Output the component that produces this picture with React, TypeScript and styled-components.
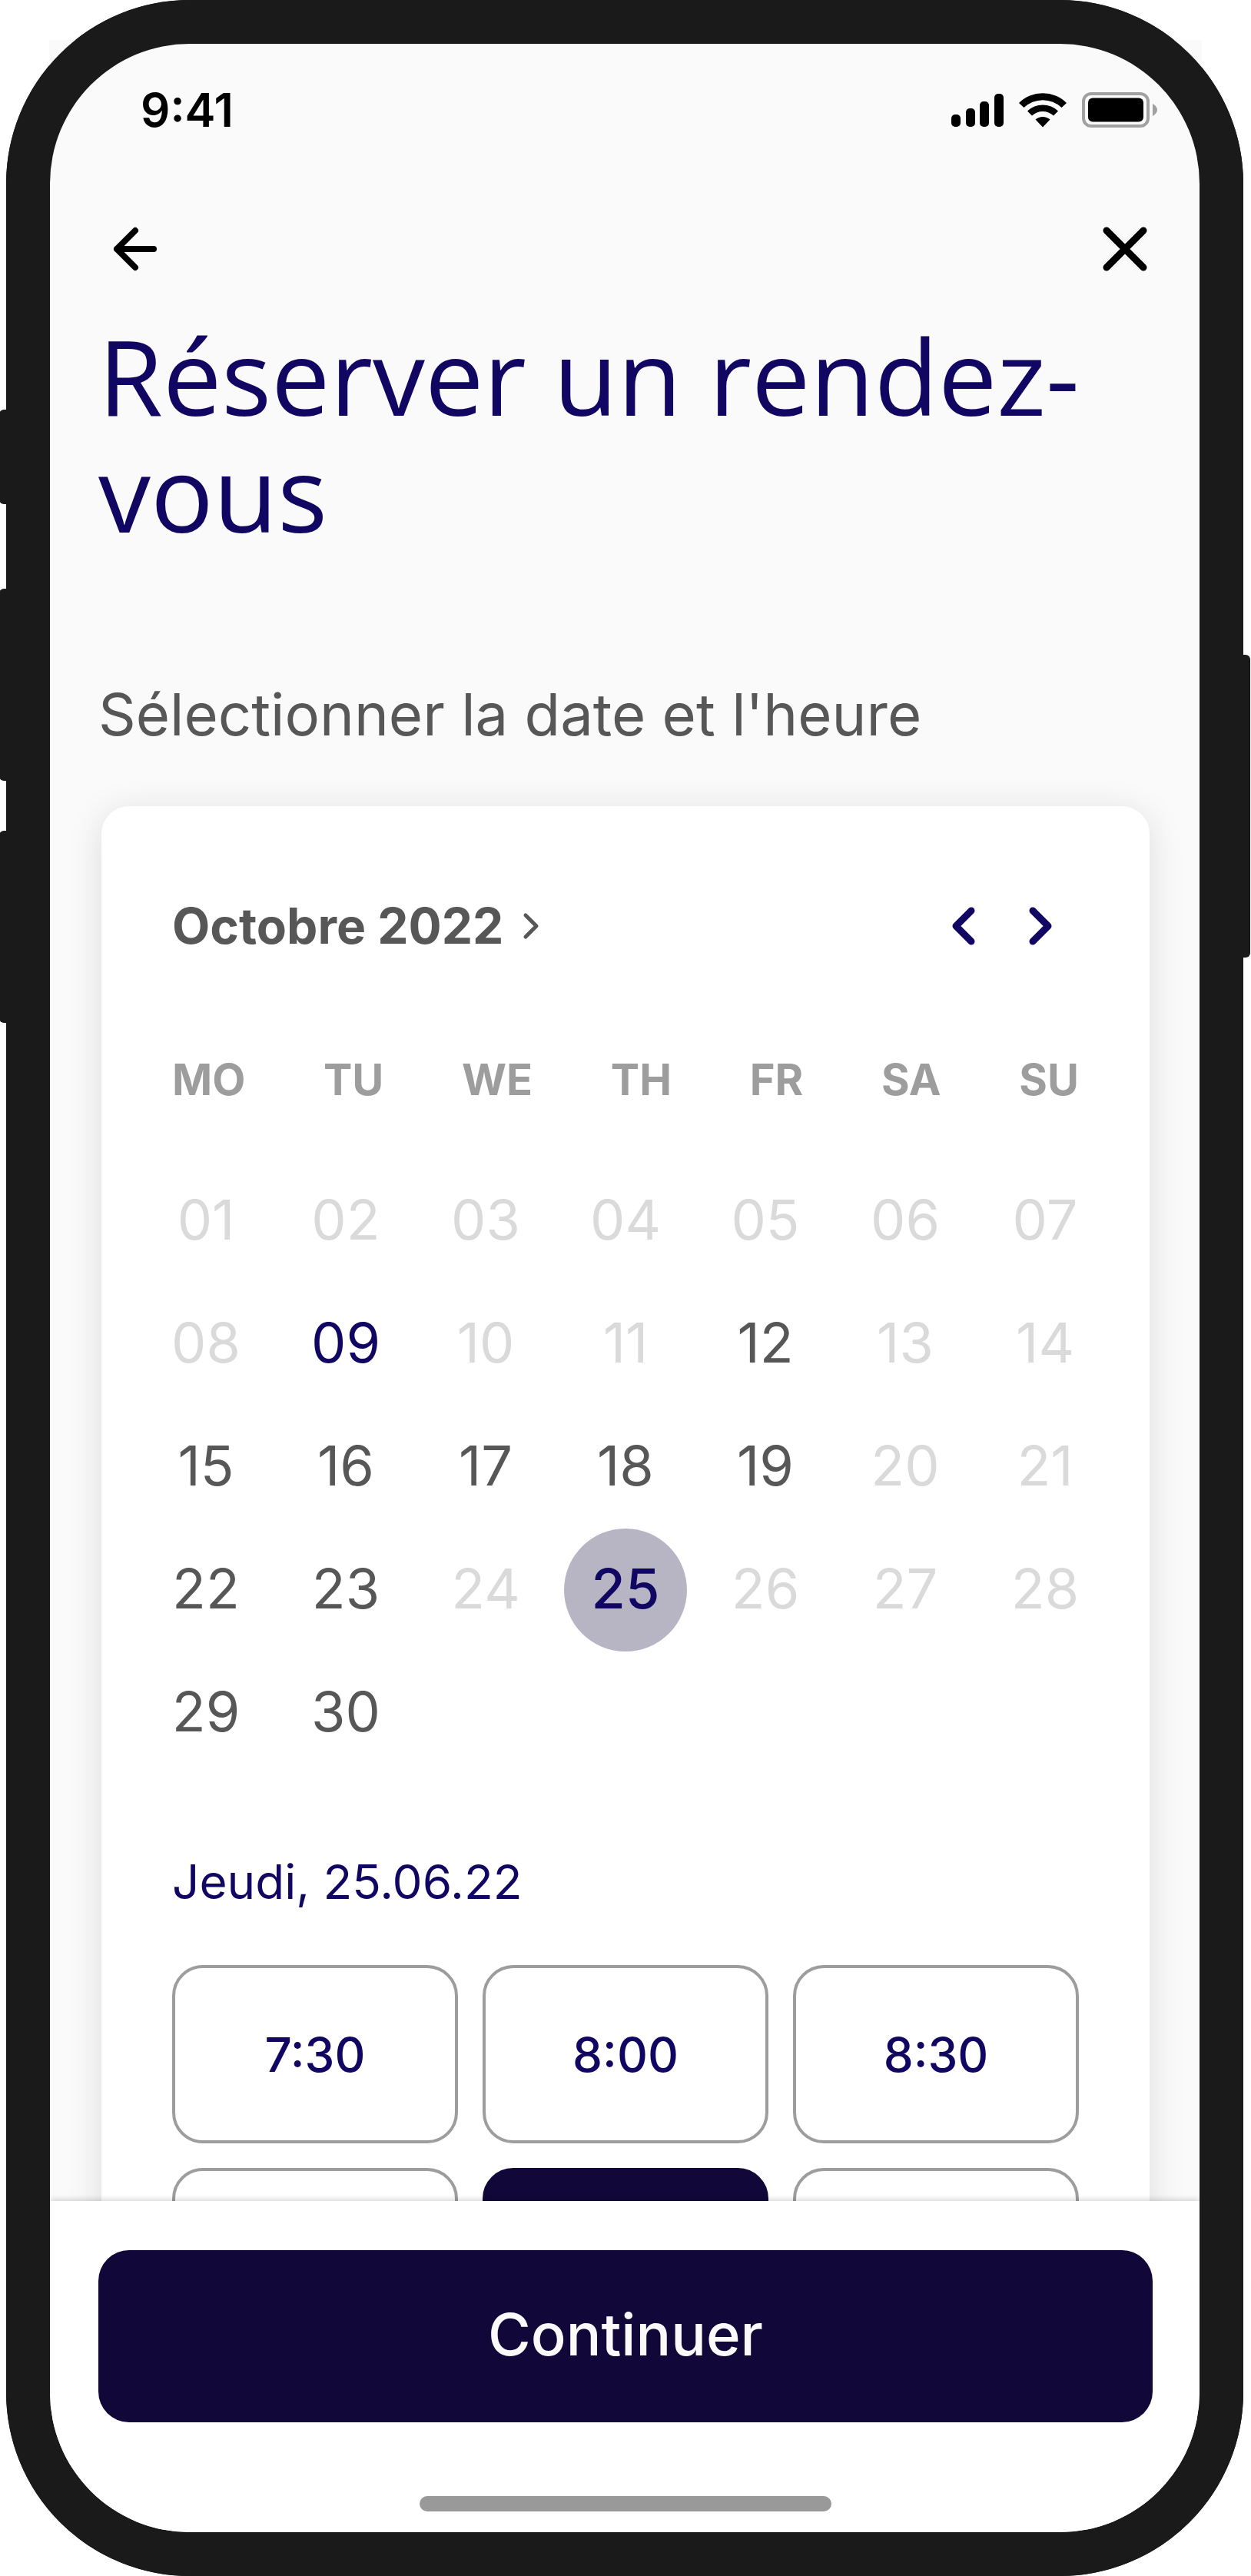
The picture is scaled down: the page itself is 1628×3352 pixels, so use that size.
import React, { useState } from "react";
import styled, { createGlobalStyle } from "styled-components";

const color = {
  bezel: "#1a1a1a",
  surface: "#fafafa",
  white: "#ffffff",
  ink: "#110763",
  navy: "#110839",
  text: "#575757",
  muted: "#9d9d9d",
  faint: "#dadada",
  selected: "#b7b5c4",
};

const GlobalStyle = createGlobalStyle`
  *, *::before, *::after { box-sizing: border-box; }
  body { margin: 0; background: ${color.white}; }
  button { font: inherit; color: inherit; border: 0; padding: 0; background: none; cursor: pointer; }
  h1, h2, p { margin: 0; font-weight: 400; }
`;

const Stage = styled.div`
  height: 100vh;
  padding: 0 10px 0 8px;
  font-family: Inter, "Liberation Sans", sans-serif;
`;

const Device = styled.div`
  position: relative;
  isolation: isolate;
  height: 100%;
  border: 57px solid ${color.bezel};
  border-radius: 239px;
  background: ${color.bezel};

  &::before {
    content: "";
    position: absolute;
    z-index: -1;
    inset: -5px -3px auto -1px;
    height: 120px;
    background: ${color.surface};
  }
`;

const Corners = styled.div`
  position: absolute;
  z-index: -1;
  inset: -57px;
  border-radius: 239px;
  background: ${color.bezel};
`;

const SideKey = styled.span<{ $side: "left" | "right"; $top: number; $height: number }>`
  position: absolute;
  z-index: -1;
  ${(p) => p.$side}: -66px;
  top: ${(p) => p.$top}px;
  width: 24px;
  height: ${(p) => p.$height}px;
  border-radius: 6px;
  background: ${color.bezel};
`;

const Screen = styled.main`
  display: flex;
  flex-direction: column;
  height: 100%;
  overflow: hidden;
  border-radius: 182px;
  background: ${color.surface};
`;

const StatusBar = styled.div`
  flex: none;
  display: flex;
  align-items: center;
  justify-content: space-between;
  height: 172px;
  padding: 0 55px 0 118px;
  color: #000;
`;

const Clock = styled.time`
  font-size: 60px;
  line-height: 72px;
  font-weight: 600;
`;

const StatusIcons = styled.svg`
  width: 268px;
  height: 48px;
`;

const Content = styled.div`
  flex: 1;
  min-height: 0;
  overflow: hidden;
  padding: 0 61px 0 63px;
`;

const Nav = styled.nav`
  display: flex;
  align-items: center;
  justify-content: space-between;
  padding: 48px 0 40px;
`;

const IconButton = styled.button<{ $width: number; $height: number }>`
  display: flex;
  width: ${(p) => p.$width}px;
  height: ${(p) => p.$height}px;

  svg {
    width: 100%;
    height: 100%;
    fill: none;
    stroke: currentColor;
    stroke-linecap: round;
    stroke-linejoin: round;
  }
`;

const Title = styled.h1`
  font-family: "Open Sans", "Noto Sans", sans-serif;
  font-size: 136px;
  line-height: 152px;
  color: ${color.ink};
`;

const Subtitle = styled.p`
  margin: 160px 0 68px;
  font-size: 76px;
  line-height: 104px;
  color: ${color.text};
`;

const Card = styled.section`
  margin: 0 4px;
  padding: 108px 92px;
  border-radius: 36px;
  background: ${color.white};
  box-shadow: 0 8px 48px rgba(0, 0, 0, 0.12);
`;

const CardHeader = styled.div`
  display: flex;
  align-items: center;
  justify-content: space-between;
`;

const MonthButton = styled.button`
  display: flex;
  align-items: center;
  gap: 20px;
  height: 96px;
  font-size: 64px;
  line-height: 96px;
  font-weight: 700;
  color: ${color.text};

  svg {
    width: 32px;
    height: 48px;
    fill: none;
    stroke: currentColor;
    stroke-linecap: round;
    stroke-linejoin: round;
  }
`;

const Arrows = styled.div`
  display: flex;
  gap: 4px;
  color: ${color.ink};
`;

const Weekdays = styled.div`
  display: flex;
  justify-content: space-between;
  margin: 112px 0 64px;
  font-size: 56px;
  line-height: 80px;
  font-weight: 700;
  color: ${color.muted};
`;

const Days = styled.div`
  display: grid;
  grid-template-columns: repeat(7, 1fr);
  justify-items: center;
  margin: 0 -47px;
`;

type DayKind = "off" | "free" | "today" | "selected";

const dayColor: Record<DayKind, string> = {
  off: color.faint,
  free: color.text,
  today: color.ink,
  selected: color.ink,
};

const Day = styled.button<{ $kind: DayKind }>`
  width: 160px;
  height: 160px;
  padding-bottom: 6px;
  border-radius: 50%;
  font-size: 72px;
  font-weight: ${(p) => (p.$kind === "selected" ? 500 : 400)};
  color: ${(p) => dayColor[p.$kind]};
  background: ${(p) => (p.$kind === "selected" ? color.selected : "transparent")};
`;

const DateLabel = styled.h2`
  margin: 92px 0 60px;
  font-size: 62px;
  line-height: 96px;
  color: ${color.ink};
`;

const Slots = styled.div`
  display: grid;
  grid-template-columns: repeat(3, 1fr);
  gap: 32px;
`;

const Slot = styled.button<{ $active?: boolean }>`
  height: 232px;
  border: 4px solid ${(p) => (p.$active ? color.navy : color.muted)};
  border-radius: 40px;
  background: ${(p) => (p.$active ? color.navy : color.white)};
  font-size: 62px;
  font-weight: 500;
  color: ${(p) => (p.$active ? color.surface : color.ink)};
`;

const Footer = styled.footer`
  position: relative;
  flex: none;
  display: flex;
  flex-direction: column;
  align-items: center;
  gap: 96px;
  padding: 64px 61px 27px 63px;
  background: ${color.white};
  box-shadow: 0 -1px 8px rgba(0, 0, 0, 0.2);
`;

const Continue = styled.button`
  width: 100%;
  height: 224px;
  padding-bottom: 6px;
  border-radius: 40px;
  background: ${color.navy};
  font-size: 76px;
  font-weight: 500;
  color: ${color.surface};
`;

const HomeIndicator = styled.div`
  width: 536px;
  height: 20px;
  border-radius: 10px;
  background: #999;
`;

const weekdays = ["MO", "TU", "WE", "TH", "FR", "SA", "SU"];
const openDays = [12, 15, 16, 17, 18, 19, 22, 23, 29, 30];
const slots = ["7:30", "8:00", "8:30"];
const laterSlots = ["9:00", "9:30", "10:00"];

export default function App() {
  const [selected, setSelected] = useState(25);

  const kindOf = (day: number): DayKind => {
    if (day === selected) return "selected";
    if (day === 9) return "today";
    return openDays.includes(day) ? "free" : "off";
  };

  return (
    <Stage>
      <GlobalStyle />
      <Device>
        <Corners />
        <SideKey $side="left" $top={476} $height={123} />
        <SideKey $side="left" $top={709} $height={250} />
        <SideKey $side="left" $top={1024} $height={250} />
        <SideKey $side="right" $top={795} $height={394} />
        <Screen>
          <StatusBar>
            <Clock>9:41</Clock>
            <StatusIcons viewBox="0 0 268 48" aria-hidden="true">
              <rect x="0" y="30" width="12" height="16" rx="5" />
              <rect x="19" y="22" width="12" height="24" rx="5" />
              <rect x="37" y="13" width="12" height="33" rx="5" />
              <rect x="56" y="3" width="12" height="43" rx="5" />
              <path d="M88 15 A44 44 0 0 1 150 15 L143.500 21 A35.500 35.500 0 0 0 94.500 21 Z" />
              <path d="M99 25.500 A29 29 0 0 1 139 25.500 L133 31.500 A20.500 20.500 0 0 0 105 31.500 Z" />
              <path d="M109.500 36.500 A14.500 14.500 0 0 1 128.500 36.500 L119 46.500 Z" />
              <rect x="172" y="3" width="84" height="42" rx="10" fill="none" stroke="#a1a1a1" strokeWidth="4" />
              <rect x="178" y="8.500" width="72" height="31" rx="6" />
              <path d="M262 16 Q268 19.500 268 24 Q268 28.500 262 32 Z" fill="#a1a1a1" />
            </StatusIcons>
          </StatusBar>
          <Content>
            <Nav>
              <IconButton $width={96} $height={96} aria-label="Retour">
                <svg viewBox="0 0 96 96" strokeWidth="8">
                  <path d="M72 47H24M48 23L24 47L48 71" />
                </svg>
              </IconButton>
              <IconButton $width={72} $height={96} aria-label="Fermer">
                <svg viewBox="0 0 72 96" strokeWidth="9">
                  <path d="M12 23L60 71M60 23L12 71" />
                </svg>
              </IconButton>
            </Nav>
            <Title>Réserver un rendez-vous</Title>
            <Subtitle>Sélectionner la date et l'heure</Subtitle>
            <Card>
              <CardHeader>
                <MonthButton>
                  Octobre 2022
                  <svg viewBox="0 0 32 48" strokeWidth="5" aria-hidden="true">
                    <path d="M9 10L23 24L9 38" />
                  </svg>
                </MonthButton>
                <Arrows>
                  <IconButton $width={96} $height={96} aria-label="Mois précédent">
                    <svg viewBox="0 0 96 96" strokeWidth="9">
                      <path d="M56 28L36 48L56 68" />
                    </svg>
                  </IconButton>
                  <IconButton $width={96} $height={96} aria-label="Mois suivant">
                    <svg viewBox="0 0 96 96" strokeWidth="9">
                      <path d="M36 28L56 48L36 68" />
                    </svg>
                  </IconButton>
                </Arrows>
              </CardHeader>
              <Weekdays>
                {weekdays.map((name) => (
                  <span key={name}>{name}</span>
                ))}
              </Weekdays>
              <Days>
                {Array.from({ length: 30 }, (_, i) => i + 1).map((day) => (
                  <Day key={day} $kind={kindOf(day)} onClick={() => setSelected(day)}>
                    {String(day).padStart(2, "0")}
                  </Day>
                ))}
              </Days>
              <DateLabel>Jeudi, 25.06.22</DateLabel>
              <Slots>
                {slots.map((time) => (
                  <Slot key={time}>{time}</Slot>
                ))}
                {laterSlots.map((time) => (
                  <Slot key={time} $active={time === "9:30"} aria-label={time} />
                ))}
              </Slots>
            </Card>
          </Content>
          <Footer>
            <Continue>Continuer</Continue>
            <HomeIndicator />
          </Footer>
        </Screen>
      </Device>
    </Stage>
  );
}
